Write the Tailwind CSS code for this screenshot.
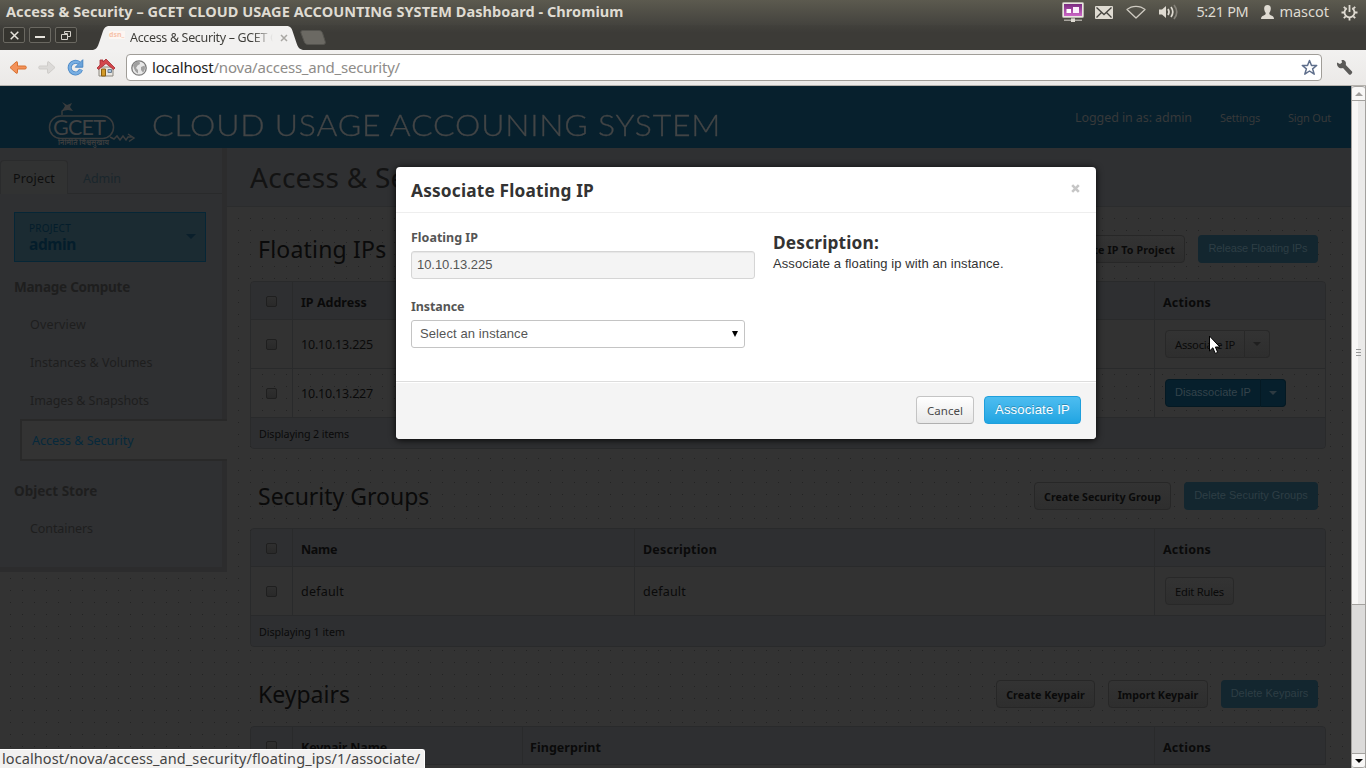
<!DOCTYPE html>
<html lang="en">
<head>
<meta charset="utf-8">
<title>Access &amp; Security – GCET CLOUD USAGE ACCOUNTING SYSTEM Dashboard</title>
<script src="https://cdn.jsdelivr.net/npm/@tailwindcss/browser@4"></script>
</head>
<body class="relative flex h-[768px] w-[1366px] flex-col overflow-hidden font-['Noto_Sans',sans-serif] text-[12.5px] whitespace-nowrap bg-[#333]">

<!-- Desktop panel -->
<div class="flex h-[25px] shrink-0 items-center justify-between bg-linear-to-b from-[#5c5a4f] to-[#44433e] pl-1.5 pr-[8px] pb-px text-[14.5px] text-[#dfdbd2]">
  <div class="font-bold tracking-[0.06px]">Access &amp; Security – GCET CLOUD USAGE ACCOUNTING SYSTEM Dashboard - Chromium</div>
  <div class="flex items-center">
    <svg class="mr-[11px]" width="22" height="20" viewBox="0 0 22 20"><defs><linearGradient id="scr" x2="0" y2="1"><stop stop-color="#7a2c80"/><stop offset="1" stop-color="#cc66c6"/></linearGradient></defs><rect x=".5" y=".5" width="21" height="15" rx="1" fill="#e8e6e0" stroke="#b9b6ae"/><rect x="2" y="2" width="18" height="12" fill="url(#scr)"/><rect x="4.500" y="7" width="4.500" height="4" fill="#fff"/><rect x="11" y="5" width="6" height="6" fill="#fbeefb"/><path d="M9 16h4v1.500h7v1.500H2v-1.500h7z" fill="#a9a69f"/><rect x="9" y="17" width="4" height="3" fill="#dfdbd2"/></svg>
    <svg class="mr-[13px]" width="18" height="13" viewBox="0 0 18 13"><rect width="18" height="13" rx="1" fill="#dfdbd2"/><path d="M1.500 1.500 9 8.500l7.500-7M1.500 11.500l5-5M16.500 11.500l-5-5" fill="none" stroke="#45443f" stroke-width="1.300"/></svg>
    <svg class="mr-[13px]" width="20" height="14" viewBox="0 0 20 14"><path d="M1 4.500C6 .2 14 .2 19 4.500L10 13z" fill="none" stroke="#cfcbc2" stroke-width="1.300" stroke-linejoin="round"/></svg>
    <svg class="mr-[17px]" width="20" height="16" viewBox="0 0 20 16"><path d="M0 5.500h3L7 2v12L3 10.500H0z" fill="#dfdbd2"/><g fill="none" stroke-width="1.700"><path d="M9 5q2 3 0 6" stroke="#dfdbd2"/><path d="M12 3q3.600 5 0 10" stroke="#dfdbd2"/><path d="M15 1q5.500 7 0 14" stroke="#85827a"/></g></svg>
    <span class="mr-[13px] tracking-[-0.35px]">5:21 PM</span>
    <svg class="mr-[5px]" width="13" height="14" viewBox="0 0 13 14"><path d="M6.500 0C9 0 10 1.800 9.800 4 9.700 6 8.800 7.300 8.300 8c0 1.500.4 1.800 2 2.400 1.700.6 2.700 1.300 2.700 3.600H0c0-2.300 1-3 2.700-3.600C4.300 9.800 4.700 9.500 4.700 8 4.200 7.300 3.300 6 3.200 4 3 1.800 4 0 6.500 0z" fill="#dfdbd2"/></svg>
    <span class="mr-[12px]">mascot</span>
    <svg width="17" height="17" viewBox="0 0 17 17"><path d="M5.800 4.200a5 5 0 1 0 5.400 0" fill="none" stroke="#dfdbd2" stroke-width="1.800"/><path d="M8.500 1v7" stroke="#dfdbd2" stroke-width="1.800"/><path d="M2.800 2.800l1.900 1.900M14.200 2.800l-1.900 1.900M.5 8.500h2.500M14 8.500h2.500M2.800 14.200l1.900-1.900M14.200 14.200l-1.900-1.900M8.500 14v2.500" stroke="#dfdbd2" stroke-width="1.800"/></svg>
  </div>
</div>

<!-- Tab strip -->
<div class="flex h-[25px] shrink-0 items-start bg-linear-to-b from-[#42413c] to-[#3c3b37] to-30% pl-[3px]">
  <div class="mt-[2px] flex gap-[4px]">
    <div class="flex h-[16px] w-[22px] items-center justify-center rounded-[2px] border border-[#6a6861] bg-[#35342f]"><svg width="9" height="9" viewBox="0 0 9 9"><path d="M.7.7l7.600 7.600M8.300.7L.7 8.300" stroke="#e6e3dc" stroke-width="1.500"/></svg></div>
    <div class="flex h-[16px] w-[22px] items-center justify-center rounded-[2px] border border-[#6a6861] bg-[#35342f]"><div class="mt-[3px] h-[2px] w-[10px] bg-[#e6e3dc]"></div></div>
    <div class="flex h-[16px] w-[22px] items-center justify-center rounded-[2px] border border-[#6a6861] bg-[#35342f]"><svg width="10" height="9" viewBox="0 0 10 9"><path d="M3.500 2.500v-2h6v5h-3M.5 3.500h6v5h-6zM3.500 2.500h3v3" fill="none" stroke="#d4d1ca"/></svg></div>
  </div>
  <div class="relative ml-[16px] h-[25px] w-[210px]">
    <svg class="absolute inset-0" width="210" height="25" viewBox="0 0 210 25"><path d="M0 25C4 24 5 21 6 18L10 6C11.500 2.500 12.500 1 17 1H193c4 0 5.500 1.500 6.500 5l4 12c1.500 4 2.500 6 6.500 7z" fill="#f2f1f0"/></svg>
    <div class="relative flex h-[25px] items-center pl-[16px]">
      <div class="mb-[6px] h-[8px] w-[16px] bg-[#fdf6f2] text-[7px] leading-[7px] font-bold text-[#f6c3aa]">dsn_</div>
      <div class="mt-[2px] ml-[5px] w-[143px] overflow-hidden bg-linear-to-r from-[#3c3b37] from-85% to-[#f2f1f0] bg-clip-text tracking-[-0.34px] text-transparent">Access &amp; Security – GCET C</div>
      <svg class="ml-[7px]" width="8" height="8" viewBox="0 0 8 8"><path d="M1 1l6 6M7 1L1 7" stroke="#a9a7a3" stroke-width="1.500"/></svg>
    </div>
  </div>
  <svg class="mt-[5px] -ml-[3px]" width="26" height="15" viewBox="0 0 26 15"><path d="M3 .5h16c2 0 3 1 3.700 3l2.500 8c.6 2-.2 3-2.200 3H8c-2 0-3-.8-3.700-2.500L1 3C.4 1.500 1.200.5 3 .5z" fill="#6b6963" stroke="#55544f"/></svg>
</div>

<!-- Toolbar -->
<div class="flex h-[36px] shrink-0 items-center border-b border-[#b6b3ae] bg-linear-to-b from-[#f2f1f0] to-[#ebe9e7] pl-[9px]">
  <svg width="18" height="16" viewBox="0 0 18 16"><path d="M1 7.500l6-5.500q1.500-1 1.500.8V6h7.500q1.300 0 1.300 1.500T16 9H8.500v3.200q0 1.800-1.500.8z" fill="#f3925a" stroke="#d9702f"/></svg>
  <svg class="ml-[11px]" width="18" height="16" viewBox="0 0 18 16"><path d="M17 7.500l-6-5.500Q9.500 1 9.500 2.800V6H2Q.7 6 .7 7.500T2 9h7.500v3.200q0 1.800 1.500.8z" fill="#dcdad8" stroke="#cfcdca"/></svg>
  <svg class="ml-[11px]" width="17" height="17" viewBox="0 0 17 17"><path d="M14 10.500A5.800 5.800 0 1 1 12 4" fill="none" stroke="#4886c4" stroke-width="4"/><path d="M14 10.500A5.800 5.800 0 1 1 12 4" fill="none" stroke="#78aee2" stroke-width="2.500"/><path d="M15.800.7v7.500H8.300z" fill="#6ba3da" stroke="#4886c4"/></svg>
  <svg class="ml-[12px]" width="20" height="19" viewBox="0 0 20 19"><path d="M3 9h14v9H3z" fill="#e9e6df" stroke="#8b877e"/><path d="M5.500 11h4v7h-4z" fill="#d39a28" stroke="#8a5f10"/><path d="M12 11.500h3.500v3H12z" fill="#a8c4de" stroke="#6c7f92"/><path d="M10 1l9 9-1.500 1.500L10 5.500l-7.500 6L1 10l3-3V2h3v2z" fill="#d3474c" stroke="#a52a30" stroke-width=".8"/></svg>
  <div class="ml-[10px] flex h-[27px] w-[1196px] items-center rounded-[4px] border border-[#a09d98] bg-white pl-[4px] pr-[3px]">
    <svg width="16" height="16" viewBox="0 0 16 16"><circle cx="8" cy="8" r="7.200" fill="#e8e8e8" stroke="#7b7b7b" stroke-width="1.300"/><path d="M2 5c2-3.500 4-3.500 6.500-3.500L9 4 6.500 5.500 5 8l2 2v3.500C4.500 12 3 9.500 2 5zM10 7l3.500-1.500c1 2 .5 5-1.500 7L10 10z" fill="#a0a0a0"/></svg>
    <div class="ml-[5px] flex-1 pb-[1px] text-[15px] tracking-[-0.21px] text-[#8e8c89]"><span class="text-[#1d1d1d]">localhost</span>/nova/access_and_security/</div>
    <svg width="17" height="17" viewBox="0 0 17 17"><path d="M8.500 1.500l2 5h5.200l-4.100 3.300 1.600 5.400-4.700-3.200-4.700 3.200 1.600-5.400L1.300 6.500h5.200z" fill="#fff" stroke="#5f6f8c" stroke-width="1.500" stroke-linejoin="round"/></svg>
  </div>
  <svg class="ml-[14px]" width="17" height="17" viewBox="0 0 17 17"><path d="M1 3.500l3 1.500L6 3.500 5.500 1C9 .3 10.500 3 9.800 6l6.200 6.500c1 1.500-1.500 4-3 3L7 9C4 10 .5 8 1 3.500z" fill="#5b5a58"/></svg>
</div>

<!-- Page -->
<div class="flex min-h-0 flex-1">
  <div class="flex min-w-0 flex-1 flex-col overflow-hidden">
    <header class="flex h-[62px] shrink-0 items-start bg-[#07202d] pl-[48px] pr-[20px] text-[#37393a]">
      <svg class="mt-[15px]" width="90" height="47" viewBox="0 0 90 47"><g fill="none" stroke="#3a3c3d" stroke-width="1.500"><rect x="1.500" y="15" width="64" height="22.500" rx="11"/><path d="M62 36l4 2 3-3 3 4 3-4 3 4 2-3h5M80 33l6 4-5 3.500M14 14v-4l4-3"/></g><path d="M14 1l5 3 5-2-2 4 3 4-5-1-6 1 3-5z" fill="#3a3c3d"/><text x="5" y="34" font-family="Lato" font-size="21.500" textLength="53" fill="#404243">GCET</text><text x="10" y="44" font-family="'Noto Sans Devanagari','Noto Sans',sans-serif" font-size="8" font-weight="700" textLength="51" lengthAdjust="spacingAndGlyphs" fill="#3a3c3d">निर्मिति विश्वसुखाय</text></svg>
      <div class="mt-[21px] ml-[14px] w-[720px] origin-left scale-x-[1.085] font-['Lato'] text-[29.5px] leading-[36px] font-light tracking-[0.72px] text-[#434546] [-webkit-text-stroke:0.3px_#434546]">CLOUD USAGE ACCOUNING SYSTEM</div>
      <div class="mt-[23px] ml-auto flex items-center"><span class="tracking-[-0.09px]">Logged in as: admin</span><span class="ml-[28px] text-[11px] tracking-[-0.23px]">Settings</span><span class="ml-[28px] text-[11px] tracking-[-0.21px]">Sign Out</span></div>
    </header>

    <div class="flex min-h-0 flex-1 items-start bg-[#333] bg-[conic-gradient(at_1px_1px,transparent_75%,#232323_0)] bg-[length:12px_12px] bg-[position:10px_10px]">
      <aside class="flex h-[424px] w-[227px] shrink-0 flex-col border-r-[5px] border-b-[5px] border-[#2c2c2d] bg-[#2f3032] text-[#1e1e1e]">
        <div class="flex h-[46px] items-end border-b border-[#292a2b]">
          <div class="-mb-px flex h-[34px] w-[68px] items-center justify-center rounded-t-[4px] border border-b-0 border-[#2a2b2c] bg-[#313232] pt-[3px] tracking-[0.17px] text-[#0e0e0e]">Project</div>
          <div class="flex h-[33px] items-center pt-[5px] pl-[15px] tracking-[-0.07px] text-[#1a262c]">Admin</div>
        </div>
        <div class="mt-[18px] ml-[14px] flex h-[50px] w-[192px] items-center justify-between border border-[#062636] bg-[#1b2b32] pl-[14px] pr-[9px] text-[#041d2b]">
          <div><div class="mt-[2px] text-[10px] leading-[12px] tracking-[0.25px]">PROJECT</div><div class="text-[15.5px] leading-[21px] font-bold tracking-[-0.4px]">admin</div></div>
          <div class="mb-[2px] border-x-[5px] border-t-[5px] border-x-transparent border-t-[#0a1f2b]"></div>
        </div>
        <div class="flex h-[43px] items-center pt-[7px] pl-[14px] text-[13.5px] font-bold tracking-[-0.23px]">Manage Compute</div>
        <div class="flex h-[38px] items-center pt-[2px] pl-[30px] tracking-[0.18px]">Overview</div>
        <div class="flex h-[38px] items-center pt-[2px] pl-[30px]">Instances &amp; Volumes</div>
        <div class="flex h-[38px] items-center pt-[2px] pl-[30px] tracking-[-0.08px]">Images &amp; Snapshots</div>
        <div class="-mr-[5px] ml-[20px] flex h-[42px] items-center border-2 border-r-0 border-[#292929] bg-[#333] pt-[2px] pl-[10px] text-[#06293c]">Access &amp; Security</div>
        <div class="flex h-[48px] items-center pt-[12px] pl-[14px] text-[13.5px] font-bold">Object Store</div>
        <div class="flex h-[38px] items-center pt-[2px] pl-[30px] tracking-[-0.09px]">Containers</div>
      </aside>

      <main class="w-[1124px] shrink-0 text-[#0a0a0a]">
        <div class="flex h-[59px] items-center border-b border-[#2b2c2d] bg-[#2f3032] pl-[23px] text-[28px] tracking-[0.28px] text-[#131313]">Access &amp; Security</div>

        <section class="w-[1099px] pl-[23px]">
          <div class="flex h-[74px] items-center gap-[13px] pt-[28px] pr-[8px] pb-[18px] pl-[8px] text-[10.7px] font-bold">
            <h2 class="mr-auto text-[23px] font-normal tracking-[0.2px]">Floating IPs</h2>
            <div class="flex h-[28px] items-center justify-center rounded-[4px] border border-[#272727] bg-linear-to-b from-[#333] to-[#2e2e2e] px-[9px] pt-[2px] tracking-[0.12px]">Allocate IP To Project</div>
            <div class="flex h-[28px] w-[120px] items-center justify-center rounded-[4px] bg-[#13262f] pb-px font-['Liberation_Sans'] text-[11px] font-normal tracking-[-0.13px] text-[#2e3e45]">Release Floating IPs</div>
          </div>
          <div class="overflow-hidden rounded-[4px] border border-[#292a2b]">
            <div class="flex h-[37px] bg-[#2e2f31] font-bold">
              <div class="flex w-[42px] items-center justify-center border-r border-[#292a2b] pt-px"><i class="block h-[11px] w-[11px] rounded-[2px] border border-[#1f1f1f] bg-linear-to-b from-[#2f2f2f] to-[#292929]"></i></div>
              <div class="flex w-[862px] items-center border-r border-[#292a2b] pt-[5px] pl-[8px]">IP Address</div>
              <div class="flex items-center pt-[5px] pl-[8px] tracking-[0.22px]">Actions</div>
            </div>
            <div class="flex h-[49px] border-t border-[#292a2b] bg-[#323232]">
              <div class="flex w-[42px] items-center justify-center border-r border-[#292a2b] pt-px"><i class="block h-[11px] w-[11px] rounded-[2px] border border-[#1f1f1f] bg-linear-to-b from-[#2f2f2f] to-[#292929]"></i></div>
              <div class="flex w-[862px] items-center border-r border-[#292a2b] pt-[2px] pl-[8px] tracking-[-0.2px]">10.10.13.225</div>
              <div class="flex items-center pl-[10px] text-[11.2px] tracking-[-0.25px]">
                <div class="flex h-[28px] w-[80px] items-center justify-center rounded-l-[4px] border border-[#282828] bg-linear-to-b from-[#333] to-[#2e2e2e] pt-[2px]">Associate IP</div>
                <div class="flex h-[28px] w-[25px] items-center justify-center rounded-r-[4px] border border-l-0 border-[#282828] bg-linear-to-b from-[#333] to-[#2e2e2e]"><i class="block border-x-[4px] border-t-[4px] border-x-transparent border-t-[#1f1f1f]"></i></div>
              </div>
            </div>
            <div class="flex h-[49px] border-t border-[#292a2b]">
              <div class="flex w-[42px] items-center justify-center border-r border-[#292a2b] pt-px"><i class="block h-[11px] w-[11px] rounded-[2px] border border-[#1f1f1f] bg-linear-to-b from-[#2f2f2f] to-[#292929]"></i></div>
              <div class="flex w-[862px] items-center border-r border-[#292a2b] pt-[2px] pl-[8px] tracking-[-0.2px]">10.10.13.227</div>
              <div class="flex items-center pl-[10px] font-['Liberation_Sans'] text-[11px] text-[#34434b]">
                <div class="flex h-[28px] w-[96px] items-center justify-center rounded-l-[4px] border border-[#041923] bg-[#061f2c] pb-[2px]">Disassociate IP</div>
                <div class="flex h-[28px] w-[25px] items-center justify-center rounded-r-[4px] border border-l-0 border-[#041923] bg-[#061f2c]"><i class="block border-x-[4px] border-t-[4px] border-x-transparent border-t-[#2d3a41]"></i></div>
              </div>
            </div>
            <div class="flex h-[31px] items-center border-t border-[#292a2b] bg-[#2e2f31] pt-[3px] pl-[8px] text-[10.7px] tracking-[-0.1px]">Displaying 2 items</div>
          </div>
        </section>

        <section class="w-[1099px] pl-[23px]">
          <div class="flex h-[79px] items-center gap-[13px] pt-[33px] pr-[8px] pb-[18px] pl-[8px] text-[10.7px] font-bold">
            <h2 class="mr-auto text-[23px] font-normal">Security Groups</h2>
            <div class="flex h-[28px] w-[137px] items-center justify-center rounded-[4px] border border-[#272727] bg-linear-to-b from-[#333] to-[#2e2e2e] pt-[2px]">Create Security Group</div>
            <div class="flex h-[28px] w-[134px] items-center justify-center rounded-[4px] bg-[#13262f] pb-px font-['Liberation_Sans'] text-[11px] font-normal text-[#2e3e45]">Delete Security Groups</div>
          </div>
          <div class="overflow-hidden rounded-[4px] border border-[#292a2b]">
            <div class="flex h-[37px] bg-[#2e2f31] font-bold">
              <div class="flex w-[42px] items-center justify-center border-r border-[#292a2b] pt-px"><i class="block h-[11px] w-[11px] rounded-[2px] border border-[#1f1f1f] bg-linear-to-b from-[#2f2f2f] to-[#292929]"></i></div>
              <div class="flex w-[342px] items-center border-r border-[#292a2b] pt-[5px] pl-[8px] tracking-[-0.3px]">Name</div>
              <div class="flex w-[520px] items-center border-r border-[#292a2b] pt-[5px] pl-[8px] tracking-[0.21px]">Description</div>
              <div class="flex items-center pt-[5px] pl-[8px] tracking-[0.22px]">Actions</div>
            </div>
            <div class="flex h-[49px] border-t border-[#292a2b] bg-[#323232]">
              <div class="flex w-[42px] items-center justify-center border-r border-[#292a2b] pt-px"><i class="block h-[11px] w-[11px] rounded-[2px] border border-[#1f1f1f] bg-linear-to-b from-[#2f2f2f] to-[#292929]"></i></div>
              <div class="flex w-[342px] items-center border-r border-[#292a2b] pt-[2px] pl-[8px] tracking-[0.21px]">default</div>
              <div class="flex w-[520px] items-center border-r border-[#292a2b] pt-[2px] pl-[8px] tracking-[0.21px]">default</div>
              <div class="flex items-center pl-[10px] text-[11.2px] tracking-[-0.24px]">
                <div class="flex h-[28px] w-[69px] items-center justify-center rounded-[4px] border border-[#282828] bg-linear-to-b from-[#333] to-[#2e2e2e] pt-[2px]">Edit Rules</div>
              </div>
            </div>
            <div class="flex h-[31px] items-center border-t border-[#292a2b] bg-[#2e2f31] pt-[3px] pl-[8px] text-[10.7px] tracking-[-0.05px]">Displaying 1 item</div>
          </div>
        </section>

        <section class="w-[1099px] pl-[23px]">
          <div class="flex h-[79px] items-center gap-[13px] pt-[33px] pr-[8px] pb-[18px] pl-[8px] text-[10.7px] font-bold">
            <h2 class="mr-auto text-[23px] font-normal">Keypairs</h2>
            <div class="flex h-[28px] w-[99px] items-center justify-center rounded-[4px] border border-[#272727] bg-linear-to-b from-[#333] to-[#2e2e2e] pt-[2px]">Create Keypair</div>
            <div class="flex h-[28px] w-[100px] items-center justify-center rounded-[4px] border border-[#272727] bg-linear-to-b from-[#333] to-[#2e2e2e] pt-[2px]">Import Keypair</div>
            <div class="flex h-[28px] w-[97px] items-center justify-center rounded-[4px] bg-[#13262f] pb-px font-['Liberation_Sans'] text-[11px] font-normal text-[#2e3e45]">Delete Keypairs</div>
          </div>
          <div class="overflow-hidden rounded-t-[4px] border border-[#292a2b]">
            <div class="flex h-[37px] bg-[#2e2f31] font-bold">
              <div class="flex w-[42px] items-center justify-center border-r border-[#292a2b] pt-px"><i class="block h-[11px] w-[11px] rounded-[2px] border border-[#1f1f1f] bg-linear-to-b from-[#2f2f2f] to-[#292929]"></i></div>
              <div class="flex w-[230px] items-center border-r border-[#292a2b] pt-[5px] pl-[8px] tracking-[-0.16px]">Keypair Name</div>
              <div class="flex w-[632px] items-center border-r border-[#292a2b] pt-[5px] pl-[7px] tracking-[0.05px]">Fingerprint</div>
              <div class="flex items-center pt-[5px] pl-[8px] tracking-[0.22px]">Actions</div>
            </div>
          </div>
        </section>
      </main>
    </div>
  </div>

  <!-- Scrollbar -->
  <div class="flex w-[15px] shrink-0 flex-col border-x border-[#a3a19e] bg-[#dcdbda]">
    <div class="flex h-[15px] items-center justify-center rounded-t-[3px] border-t border-b border-[#a3a19e] bg-[#f8f7f6]"><i class="block border-x-[4px] border-b-[4px] border-x-transparent border-b-[#a09e9b]"></i></div>
    <div class="flex h-[504px] flex-col items-center justify-center gap-[2px] border-b border-[#a3a19e] bg-linear-to-r from-[#f8f7f6] from-50% to-[#ebeae9] to-50%">
      <i class="block h-px w-[5px] bg-[#999]"></i><i class="block h-px w-[5px] bg-[#999]"></i><i class="block h-px w-[5px] bg-[#999]"></i>
    </div>
    <div class="mt-auto flex h-[15px] items-center justify-center rounded-b-[3px] border-t border-b border-[#a3a19e] bg-[#f8f7f6]"><i class="block border-x-[4px] border-t-[4px] border-x-transparent border-t-black"></i></div>
  </div>
</div>

<!-- Modal -->
<div class="absolute top-[167px] left-[396px] flex h-[272px] w-[700px] flex-col overflow-hidden rounded-[4px] bg-white text-[#333] shadow-[0_1px_7px_rgba(0,0,0,0.9)]">
  <div class="flex h-[46px] shrink-0 items-center justify-between border-b border-[#eee] pt-[2px] pr-[16px] pl-[15px]">
    <h3 class="text-[17.3px] font-bold tracking-[0.17px]">Associate Floating IP</h3>
    <svg class="mb-[4px]" width="9" height="9" viewBox="0 0 9 9"><path d="M1.200 1.200l6.600 6.600M7.800 1.200L1.200 7.800" stroke="#c6c6c6" stroke-width="2.600"/></svg>
  </div>
  <div class="flex flex-1 pl-[15px]">
    <div class="w-[362px] text-[#555]">
      <div class="mt-[16px] h-[18px] leading-[18px] font-bold">Floating IP</div>
      <div class="mt-[4px] flex h-[28px] w-[344px] items-center rounded-[3px] border border-[#d5d5d5] bg-[#f4f4f4] pl-[5px] font-['Liberation_Sans'] text-[13px] tracking-[-0.05px] shadow-[inset_0_1px_1px_rgba(0,0,0,0.06)]">10.10.13.225</div>
      <div class="mt-[19px] h-[18px] leading-[18px] font-bold tracking-[-0.1px]">Instance</div>
      <div class="mt-[4px] flex h-[28px] w-[334px] items-center justify-between rounded-[3px] border border-[#c4c4c4] bg-white pr-[6px] pl-[8px] font-['Liberation_Sans'] text-[13px] tracking-[0.1px]">Select an instance<i class="block border-x-[3.5px] border-t-[6px] border-x-transparent border-t-black"></i></div>
    </div>
    <div>
      <h3 class="mt-[16px] text-[17.3px] leading-[27px] font-bold tracking-[0.17px]">Description:</h3>
      <p class="font-['Liberation_Sans'] text-[13px] leading-[16px] tracking-[0.09px]">Associate a floating ip with an instance.</p>
    </div>
  </div>
  <div class="flex h-[58px] shrink-0 items-start justify-end gap-[10px] border-t border-[#ddd] bg-[#f4f4f4] pt-[14px] pr-[15px] shadow-[inset_0_1px_0_#fff]">
    <div class="flex h-[28px] w-[58px] items-center justify-center rounded-[4px] border border-[#c4c4c4] border-b-[#b0b0b0] bg-linear-to-b from-white to-[#e8e8e8] pt-px text-[11.5px] text-[#4a4a4a]">Cancel</div>
    <div class="flex h-[28px] w-[97px] items-center justify-center rounded-[4px] border border-[#1f9fdc] bg-linear-to-b from-[#4cbdf0] to-[#1fa5e2] pb-px font-['Liberation_Sans'] text-[13px] tracking-[0.23px] text-white [text-shadow:0_-1px_0_rgba(0,0,0,0.25)]">Associate IP</div>
  </div>
</div>

<!-- Mouse pointer -->
<svg class="absolute top-[335px] left-[1208px]" width="13" height="21" viewBox="0 0 13 21"><path d="M1.500 1v15l3.400-3.200 2.300 5.600 2.500-1-2.300-5.400h4.400z" fill="#fff" stroke="#000" stroke-width="1"/></svg>

<!-- Link status bubble -->
<div class="absolute bottom-0 left-0 flex h-[19px] w-[425px] items-center rounded-tr-[3px] border-t border-r border-[#fff] bg-[#f2f1f0] pl-[2px] text-[14.5px] tracking-[0.09px] text-[#444]">localhost/nova/access_and_security/floating_ips/1/associate/</div>
</body>
</html>
